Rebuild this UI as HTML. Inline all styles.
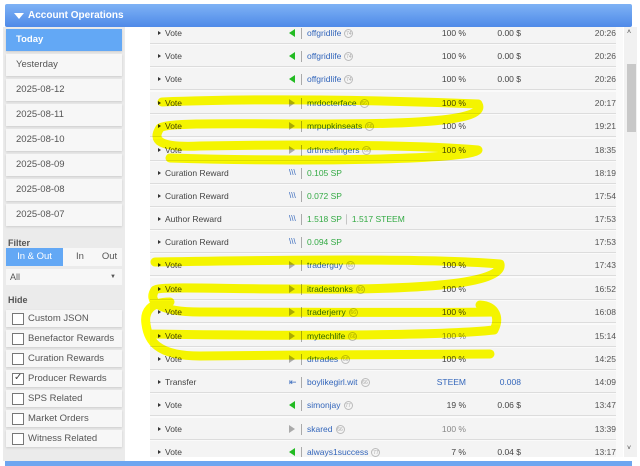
<!DOCTYPE html>
<html><head><meta charset="utf-8"><style>
*{margin:0;padding:0;box-sizing:border-box}
body{width:640px;height:466px;overflow:hidden;background:#fff;font-family:"Liberation Sans",sans-serif;font-size:8.5px;color:#444;position:relative}
.hdr{position:absolute;left:5px;top:4px;width:627px;height:23px;background:linear-gradient(#7eb2f5,#4f8ae8);color:#fff;font-weight:bold;font-size:10px;line-height:23px;padding-left:23px;border-radius:2px}
.hdr:before{content:"";position:absolute;left:9px;top:9px;border-left:5px solid transparent;border-right:5px solid transparent;border-top:6px solid #fff}
.left{position:absolute;left:3px;top:27px;width:122px;height:434px;background:#ebebeb}
.it{position:absolute;left:3px;width:116px;height:22px;background:#f7f7f7;color:#555;font-size:9.5px;line-height:22px;padding-left:10px;box-shadow:0 1px 2px #ccc}
.sel{background:#63a8f5;color:#fff;font-weight:bold}
.lbl{position:absolute;left:5px;font-size:9px;font-weight:bold;color:#555}
.cb{position:absolute;left:3px;width:116px;height:17px;background:#f7f7f7;font-size:9.5px;line-height:17px;padding-left:22px;color:#555;box-shadow:0 1px 2px #ccc}
.cb:before{content:"";position:absolute;left:6px;top:3px;width:10px;height:10px;border:1px solid #777;background:#fff}
.tbl{position:absolute;left:150px;top:27px;width:473px;height:430px;background:#fafafa;overflow:hidden}
.r{position:absolute;left:0;width:466px;height:22px;background:#f4f4f4;border-bottom:1px solid #dcdcdc;line-height:22px;font-size:8.5px;color:#444}
.r .a{position:absolute;left:8px;top:9px;border-top:2.5px solid transparent;border-bottom:2.5px solid transparent;border-left:3px solid #333}
.r .t{position:absolute;left:15px}
.r .ic{position:absolute;left:139px;top:7px}
.r .sp{position:absolute;left:151px;top:6px;width:1px;height:11px;background:#aaa}
.r .n{position:absolute;left:157px;color:#3366bb}
.r .g{color:#33aa44}
.r .p{position:absolute;right:150px}
.r .v{position:absolute;right:95px}
.r .tm{position:absolute;right:0px;color:#555}
.rep{display:inline-block;width:9px;height:9px;border:1px solid #bbb;border-radius:50%;font-size:5px;line-height:8px;text-align:center;color:#aaa;vertical-align:middle;margin-left:3px}
.tg{border-top:4px solid transparent;border-bottom:4px solid transparent;border-right:6px solid #22bb22;width:0;height:0}
.tr{border-top:4px solid transparent;border-bottom:4px solid transparent;border-left:6px solid #aaa;width:0;height:0}
.sb{position:absolute;left:624px;top:27px;width:13px;height:430px;background:#f1f1f1}
svg{mix-blend-mode:multiply}
</style></head><body>
<div class="hdr">Account Operations</div>
<div class="left">
<div class="it sel" style="top:2px">Today</div>
<div class="it" style="top:27px">Yesterday</div>
<div class="it" style="top:52px">2025-08-12</div>
<div class="it" style="top:77px">2025-08-11</div>
<div class="it" style="top:102px">2025-08-10</div>
<div class="it" style="top:127px">2025-08-09</div>
<div class="it" style="top:152px">2025-08-08</div>
<div class="it" style="top:177px">2025-08-07</div>
<div class="lbl" style="top:211px">Filter</div>
<div style="position:absolute;left:3px;top:221px;width:116px;height:18px;background:#f7f7f7;font-size:9.5px;line-height:18px;color:#555">
<span style="position:absolute;left:0;width:57px;height:18px;background:#63a8f5;color:#fff;text-align:center">In &amp; Out</span>
<span style="position:absolute;left:60px;width:28px;text-align:center">In</span>
<span style="position:absolute;left:91px;width:25px;text-align:center">Out</span></div>
<div style="position:absolute;left:3px;top:242px;width:116px;height:16px;background:#f7f7f7;font-size:9px;line-height:16px;padding-left:4px;color:#555">All<span style="position:absolute;right:6px;font-size:6px">▼</span></div>
<div class="lbl" style="top:268px">Hide</div>
<div class="cb" style="top:283px">Custom JSON</div>
<div class="cb" style="top:303px">Benefactor Rewards</div>
<div class="cb" style="top:323px">Curation Rewards</div>
<div class="cb" style="top:343px">Producer Rewards<span style="position:absolute;left:8px;top:-1px;font-size:10px;color:#444">✓</span></div>
<div class="cb" style="top:363px">SPS Related</div>
<div class="cb" style="top:383px">Market Orders</div>
<div class="cb" style="top:403px">Witness Related</div>
</div>
<div class="tbl">
<div class="r" style="top:-5px"><i class="a"></i><span class="t">Vote</span><div class="ic tg"></div><i class="sp"></i><span class="n">offgridlife<span class="rep">74</span></span><span class="p">100 %</span><span class="v">0.00 $</span><span class="tm">20:26</span></div>
<div class="r" style="top:18px"><i class="a"></i><span class="t">Vote</span><div class="ic tg"></div><i class="sp"></i><span class="n">offgridlife<span class="rep">74</span></span><span class="p">100 %</span><span class="v">0.00 $</span><span class="tm">20:26</span></div>
<div class="r" style="top:41px"><i class="a"></i><span class="t">Vote</span><div class="ic tg"></div><i class="sp"></i><span class="n">offgridlife<span class="rep">74</span></span><span class="p">100 %</span><span class="v">0.00 $</span><span class="tm">20:26</span></div>
<div class="r" style="top:65px"><i class="a"></i><span class="t">Vote</span><div class="ic tr"></div><i class="sp"></i><span class="n">mrdocterface<span class="rep">66</span></span><span class="p">100 %</span><span class="tm">20:17</span></div>
<div class="r" style="top:88px"><i class="a"></i><span class="t">Vote</span><div class="ic tr"></div><i class="sp"></i><span class="n">mrpupkinseats<span class="rep">66</span></span><span class="p">100 %</span><span class="tm">19:21</span></div>
<div class="r" style="top:112px"><i class="a"></i><span class="t">Vote</span><div class="ic tr"></div><i class="sp"></i><span class="n">drthreefingers<span class="rep">66</span></span><span class="p">100 %</span><span class="tm">18:35</span></div>
<div class="r" style="top:135px"><i class="a"></i><span class="t">Curation Reward</span><span class="ic" style="top:0;color:#3366bb;font-size:8px">\\\</span><i class="sp"></i><span class="n g">0.105 SP</span><span class="tm">18:19</span></div>
<div class="r" style="top:158px"><i class="a"></i><span class="t">Curation Reward</span><span class="ic" style="top:0;color:#3366bb;font-size:8px">\\\</span><i class="sp"></i><span class="n g">0.072 SP</span><span class="tm">17:54</span></div>
<div class="r" style="top:181px"><i class="a"></i><span class="t">Author Reward</span><span class="ic" style="top:0;color:#3366bb;font-size:8px">\\\</span><i class="sp"></i><span class="n g">1.518 SP <span style="color:#aaa">│</span> 1.517 STEEM</span><span class="tm">17:53</span></div>
<div class="r" style="top:204px"><i class="a"></i><span class="t">Curation Reward</span><span class="ic" style="top:0;color:#3366bb;font-size:8px">\\\</span><i class="sp"></i><span class="n g">0.094 SP</span><span class="tm">17:53</span></div>
<div class="r" style="top:227px"><i class="a"></i><span class="t">Vote</span><div class="ic tr"></div><i class="sp"></i><span class="n">traderguy<span class="rep">66</span></span><span class="p">100 %</span><span class="tm">17:43</span></div>
<div class="r" style="top:251px"><i class="a"></i><span class="t">Vote</span><div class="ic tr"></div><i class="sp"></i><span class="n">itradestonks<span class="rep">66</span></span><span class="p">100 %</span><span class="tm">16:52</span></div>
<div class="r" style="top:274px"><i class="a"></i><span class="t">Vote</span><div class="ic tr"></div><i class="sp"></i><span class="n">traderjerry<span class="rep">66</span></span><span class="p">100 %</span><span class="tm">16:08</span></div>
<div class="r" style="top:298px"><i class="a"></i><span class="t">Vote</span><div class="ic tr"></div><i class="sp"></i><span class="n">mytechlife<span class="rep">66</span></span><span class="p" style="color:#888">100 %</span><span class="tm">15:14</span></div>
<div class="r" style="top:321px"><i class="a"></i><span class="t">Vote</span><div class="ic tr"></div><i class="sp"></i><span class="n">drtrades<span class="rep">66</span></span><span class="p">100 %</span><span class="tm">14:25</span></div>
<div class="r" style="top:344px"><i class="a"></i><span class="t">Transfer</span><span class="ic" style="top:0;color:#3366bb;font-size:9px">⇤</span><i class="sp"></i><span class="n">boylikegirl.wit<span class="rep">66</span></span><span class="p" style="color:#3366bb">STEEM</span><span class="v" style="color:#3366bb">0.008</span><span class="tm">14:09</span></div>
<div class="r" style="top:367px"><i class="a"></i><span class="t">Vote</span><div class="ic tg"></div><i class="sp"></i><span class="n">simonjay<span class="rep">77</span></span><span class="p">19 %</span><span class="v">0.06 $</span><span class="tm">13:47</span></div>
<div class="r" style="top:391px"><i class="a"></i><span class="t">Vote</span><div class="ic tr"></div><i class="sp"></i><span class="n">skared<span class="rep">66</span></span><span class="p" style="color:#888">100 %</span><span class="tm">13:39</span></div>
<div class="r" style="top:414px"><i class="a"></i><span class="t">Vote</span><div class="ic tg"></div><i class="sp"></i><span class="n">always1success<span class="rep">77</span></span><span class="p">7 %</span><span class="v">0.04 $</span><span class="tm">13:17</span></div>
</div>
<div class="sb"><div style="position:absolute;left:3px;top:37px;width:9px;height:68px;background:#c8c8c8"></div><span style="position:absolute;left:3px;top:2px;font-size:7px">˄</span><span style="position:absolute;left:3px;top:418px;font-size:7px">˅</span></div>
<div style="position:absolute;left:5px;top:461px;width:627px;height:5px;background:#6ea6f0"></div>
<svg style="position:absolute;left:0;top:0" width="640" height="466" fill="none" stroke="#ffff00" stroke-width="9" stroke-linecap="round" stroke-linejoin="round">
<path d="M162 102 C260 98 380 100 478 104 C486 118 440 124 330 124 C240 124 168 122 160 128 C152 140 158 148 200 146 C300 144 420 145 478 150 C470 160 300 162 170 158"/>
<path d="M155 262 C280 260 430 258 500 264 C504 284 420 290 300 289 C220 289 160 286 155 290 C148 300 156 312 200 312 C300 312 420 313 494 312"/>
<path d="M170 302 C150 302 144 312 146 324 C148 340 156 356 200 356 C300 355 420 354 490 354 M150 334 C280 336 440 336 494 330 C500 318 496 306 480 305"/>
</svg>
</body></html>
